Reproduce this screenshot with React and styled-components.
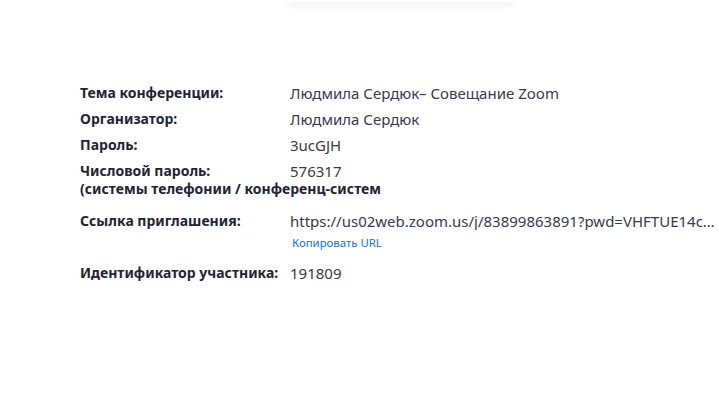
import React from "react";
import styled, { createGlobalStyle } from "styled-components";

const GlobalStyle = createGlobalStyle`
  html, body {
    margin: 0;
    padding: 0;
    background: #ffffff;
  }
  body {
    font-family: "Noto Sans", "Open Sans", sans-serif;
    color: #232333;
  }
`;

const rows = [
  { label: "Тема конференции:", value: "Людмила Сердюк– Совещание Zoom" },
  { label: "Организатор:", value: "Людмила Сердюк" },
  { label: "Пароль:", value: "3ucGJH" },
  {
    label: "Числовой пароль:",
    note: "(системы телефонии / конференц-систем)",
    value: "576317",
  },
  {
    label: "Ссылка приглашения:",
    value: "https://us02web.zoom.us/j/83899863891?pwd=VHFTUE14cWJ0a2ZkUkFjTDJ3bDhQZz09",
    copy: "Копировать URL",
    space: 14,
  },
  { label: "Идентификатор участника:", value: "191809", space: 13 },
];

const App = () => {
  return (
    <Page>
      <GlobalStyle />
      <TopBar>
        <TopCard />
      </TopBar>
      <Details>
        {rows.map((row) => (
          <Row key={row.label} $space={row.space}>
            <Label>
              {row.label}
              {row.note && <LabelNote>{row.note}</LabelNote>}
            </Label>
            <ValueCell>
              <Value>{row.value}</Value>
              {row.copy && <CopyLink href="#">{row.copy}</CopyLink>}
            </ValueCell>
          </Row>
        ))}
      </Details>
    </Page>
  );
};

const Page = styled.div`
  width: 719px;
  height: 416px;
  overflow: hidden;
  background: #fff;
`;

const TopBar = styled.div`
  display: flex;
  justify-content: center;
  padding-left: 82px;
  height: 84px;
  align-items: flex-start;
`;

const TopCard = styled.div`
  width: 226px;
  height: 2px;
  background: #fff;
  border-radius: 0 0 6px 6px;
  box-shadow: 0 1px 8px rgba(0, 0, 0, 0.22);
`;

const Details = styled.div`
  display: flex;
  flex-direction: column;
  padding: 0 2px 0 80px;
`;

const Row = styled.div`
  display: grid;
  grid-template-columns: 210px minmax(0, 1fr);
  margin-top: ${({ $space }) => ($space ? `${$space}px` : "8px")};
  &:first-child {
    margin-top: 0;
  }
  line-height: 18px;
`;

const Label = styled.div`
  font-size: 14px;
  font-weight: 700;
  color: #232333;
  white-space: nowrap;
  min-width: 0;
`;

const LabelNote = styled.div`
  width: 301px;
  overflow: hidden;
  white-space: nowrap;
`;

const ValueCell = styled.div`
  display: flex;
  flex-direction: column;
  min-width: 0;
`;

const Value = styled.div`
  font-size: 15px;
  color: #39394d;
  white-space: nowrap;
  overflow: hidden;
  text-overflow: ellipsis;
`;

const CopyLink = styled.a`
  font-size: 11.4px;
  line-height: 16px;
  margin-top: 5px;
  padding-left: 2px;
  color: #0e72ed;
  text-decoration: none;
`;

export default App;
